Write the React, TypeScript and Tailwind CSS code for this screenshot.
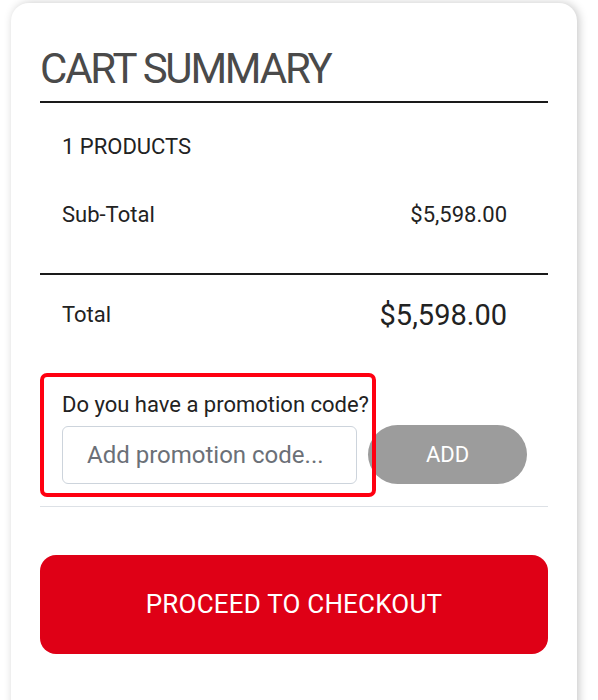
import React from "react";

const font = { fontFamily: "Roboto, 'Liberation Sans', sans-serif" };

const App: React.FC = () => {
  return (
    <main className="min-h-screen w-full bg-white overflow-hidden" style={font}>
      <div className="pt-[3px] pl-[11px] pr-[21px]">
        {/* Card */}
        <div className="bg-white rounded-t-[18px] shadow-[2px_0_10px_rgba(0,0,0,0.22)] px-[29px] pt-[44px] pb-[60px] min-h-[720px]">
          <h2 className="text-[42px] leading-[44px] font-normal text-[#4a4a4a] tracking-[-2.2px] pb-[10px] border-b-2 border-[#1a1a1a]">
            CART SUMMARY
          </h2>

          <div className="pl-[22px] pr-[41px] text-[#222]">
            <div className="pt-[31px] text-[22px] leading-[26px]">1 PRODUCTS</div>
            <div className="flex justify-between items-center pt-[42px] pb-[45px] text-[22px] leading-[26px]">
              <span>Sub-Total</span>
              <span>$5,598.00</span>
            </div>
          </div>

          <div className="border-t-2 border-[#1a1a1a] pl-[22px] pr-[41px] text-[#222]">
            <div className="flex justify-between items-center pt-[23px] text-[22px] leading-[30px]">
              <span>Total</span>
              <span className="text-[29px] leading-[34px]">$5,598.00</span>
            </div>
          </div>

          {/* Promotion code */}
          <div className="relative pt-[60px] pb-[22px] border-b border-[#dde1e6]">
            <div className="absolute left-0 top-[41px] w-[336px] h-[124px] border-[4px] border-[#ff0011] rounded-[7px] pointer-events-none" />
            <div className="pl-[22px] text-[22px] leading-[26px] text-[#222]">Do you have a promotion code?</div>
            <div className="flex items-center gap-[11px] pl-[22px] pt-[7px]">
              <input
                className="w-[295px] h-[58px] border border-[#cdd4dc] rounded-[6px] px-[24px] text-[24px] text-[#222] placeholder:text-[#6b7077] outline-none bg-white"
                placeholder="Add promotion code..."
                style={font}
              />
              <button className="w-[159px] h-[59px] rounded-full bg-[#9c9c9c] text-white text-[22px]" style={font}>
                ADD
              </button>
            </div>
          </div>

          <button className="mt-[48px] w-full h-[99px] rounded-[16px] bg-[#df0016] text-white text-[26px] tracking-[0.2px]" style={font}>
            PROCEED TO CHECKOUT
          </button>
        </div>
      </div>
    </main>
  );
};

export default App;
